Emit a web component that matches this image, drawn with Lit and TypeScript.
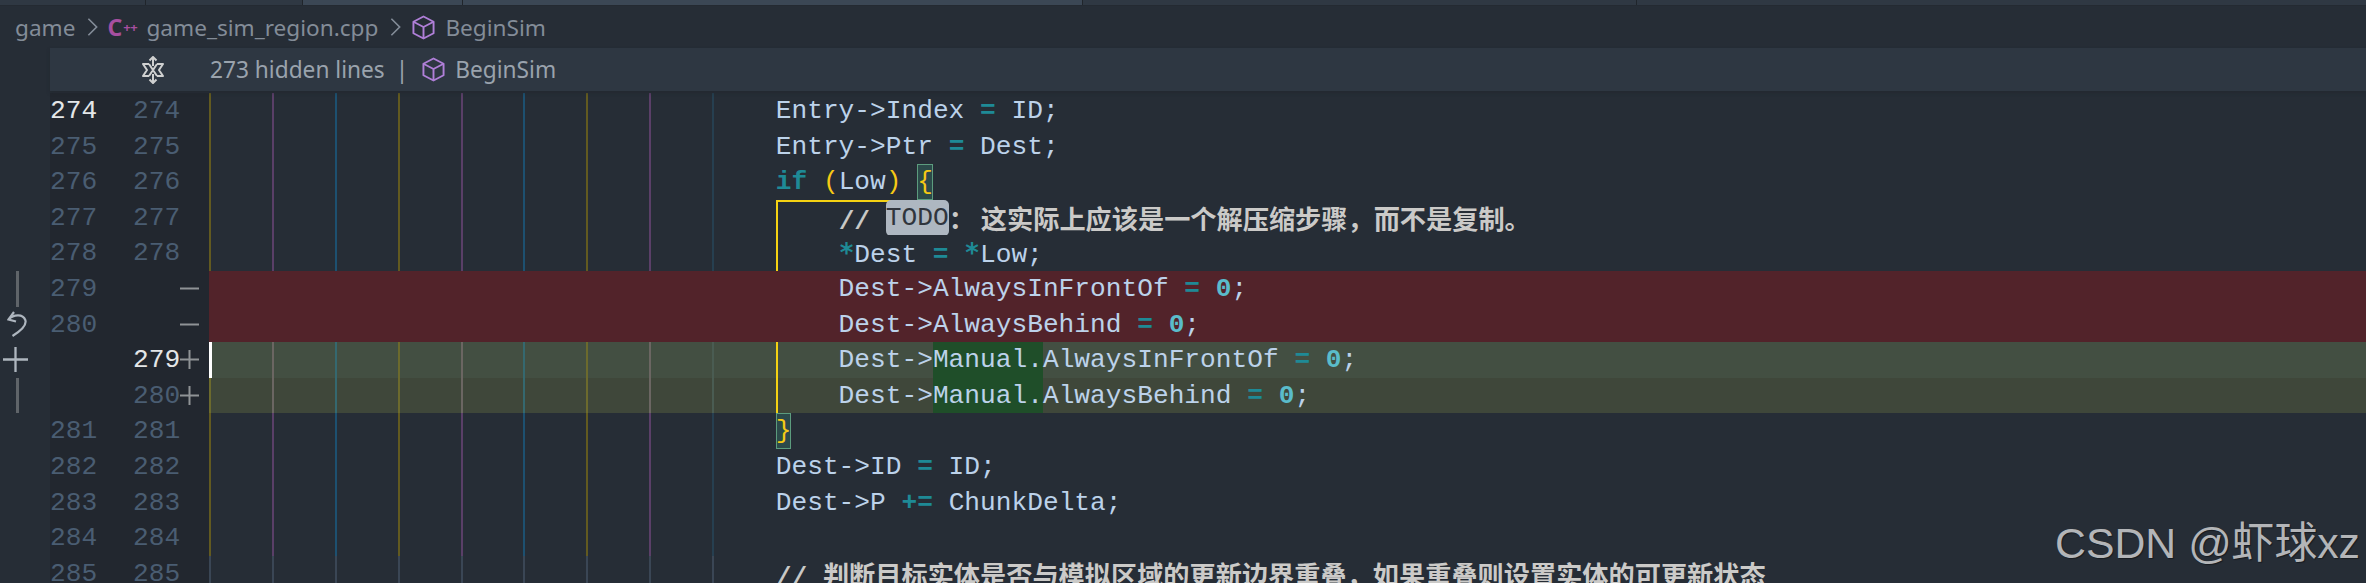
import { LitElement, html, css, svg } from "lit";
import { customElement } from "lit/decorators.js";

const cube = html`<svg class="cube" viewBox="0 0 24 26" fill="none" stroke="#b07fd8" stroke-width="2" stroke-linejoin="round"><path d="M12 1.500 22.500 7v12L12 24.500 1.500 19V7z"/><path d="M1.500 7 12 12.500 22.500 7M12 12.500v12"/></svg>`;
const chevron = html`<svg class="chev" viewBox="0 0 12 22" fill="none" stroke="#838c98" stroke-width="1.8"><path d="M1.500 2 10.500 11 1.500 20"/></svg>`;

type Kind = "" | "del" | "add1" | "add2" | "dim";
interface Row {
  o: string; n: string; sign?: "-" | "+"; kind?: Kind; active?: "o" | "n"; glyph?: "bar" | "undo" | "plus";
  code?: unknown; bracket?: "top" | "side";
}

const I = " ".repeat(36);
const op = (t: string) => html`<span class="op">${t}</span>`;
const star = html`<span class="op star">*</span>`;
const zero = html`<span class="num">0</span>`;

const rows: Row[] = [
  { o: "274", n: "274", active: "o", code: html`${I}Entry-&gt;Index ${op("=")} ID;` },
  { o: "275", n: "275", code: html`${I}Entry-&gt;Ptr ${op("=")} Dest;` },
  { o: "276", n: "276", code: html`${I}<span class="op">if</span> <span class="br">(</span>Low<span class="br">)</span> <span class="br match">{</span>` },
  { o: "277", n: "277", bracket: "top", code: html`${I}    <span class="cm">// </span><span class="todo">TODO</span><span class="cjk colon">：</span><span class="cjk">这实际上应该是一个解压缩步骤，而不是复制。</span>` },
  { o: "278", n: "278", bracket: "side", code: html`${I}    ${star}Dest ${op("=")} ${star}Low;` },
  { o: "279", n: "", sign: "-", kind: "del", glyph: "bar", code: html`${I}    Dest-&gt;AlwaysInFrontOf ${op("=")} ${zero};` },
  { o: "280", n: "", sign: "-", kind: "del", glyph: "undo", code: html`${I}    Dest-&gt;AlwaysBehind ${op("=")} ${zero};` },
  { o: "", n: "279", sign: "+", kind: "add1", active: "n", glyph: "plus", bracket: "side", code: html`${I}    Dest-&gt;<span class="ins">Manual.</span>AlwaysInFrontOf ${op("=")} ${zero};` },
  { o: "", n: "280", sign: "+", kind: "add2", glyph: "bar", bracket: "side", code: html`${I}    Dest-&gt;<span class="ins">Manual.</span>AlwaysBehind ${op("=")} ${zero};` },
  { o: "281", n: "281", code: html`${I}<span class="br match">}</span>` },
  { o: "282", n: "282", code: html`${I}Dest-&gt;ID ${op("=")} ID;` },
  { o: "283", n: "283", code: html`${I}Dest-&gt;P ${op("+=")} ChunkDelta;` },
  { o: "284", n: "284", code: html`` },
  { o: "285", n: "285", kind: "dim", code: html`${I}<span class="cm">// </span><span class="cjk">判断目标实体是否与模拟区域的更新边界重叠，如果重叠则设置实体的可更新状态</span>` },
];

const glyphs = {
  bar: html`<i class="gbar"></i>`,
  undo: html`<svg class="gsvg" viewBox="0 0 20 26" fill="none" stroke="#aeb6bf" stroke-width="2.2"><path d="M7 1 1.500 8.500 9 10.500"/><path d="M1.500 8.500C7 3 16 3 18.300 9c1.700 5-3 10-12.800 16"/></svg>`,
  plus: html`<svg class="gsvg plus" viewBox="0 0 26 26" stroke="#aeb6bf" stroke-width="2.400"><path d="M0 13h26M13 0v26"/></svg>`,
};

@customElement("app-root")
export class AppRoot extends LitElement {
  static styles = css`
    :host { display: block; width: 2366px; height: 583px; overflow: hidden; position: relative; background: #262d36; }
    .tabs { display: flex; height: 6px; background: #2f3843; border-bottom: 1px solid #242a32; box-sizing: border-box; }
    .tabs i { display: block; height: 100%; box-sizing: border-box; border-right: 1px solid #20252b; }
    .tabs .t1 { width: 146px; }
    .tabs .t2 { width: 157px; }
    .tabs .t3 { width: 160px; background: #3b4755; }
    .tabs .t4 { width: 620px; background: #3b4755; }
    .tabs .t5 { width: 554px; }
    .crumbs { height: 42px; display: flex; align-items: center; padding-left: 15px; font: 22.6px "Noto Sans", sans-serif; color: #838c98; white-space: nowrap; }
    .chev { width: 11px; height: 22px; margin: 0 9px 0 12px; flex: none; }
    .cube { width: 23px; height: 25px; flex: none; margin-left: 2px; }
    .cpp { color: #a64fa0; font: 700 23px "Noto Sans", sans-serif; width: 39px; display: flex; align-items: center; }
    .cpp small { font-size: 13px; letter-spacing: -0.5px; margin-left: 1px; }
    .crumbs .sym { margin-left: 10px; }
    .sticky { height: 43px; margin-left: 50px; background: #2e3742; display: flex; align-items: center; font: 22.7px "Noto Sans", sans-serif; color: #9aa3ad; white-space: nowrap; box-shadow: 0 2px 3px #20252b80; position: relative; z-index: 2; }
    .unfold { width: 24px; height: 28px; margin-left: 91px; margin-right: 45px; flex: none; }
    .sep { margin: 0 12px 0 11px; }
    .sticky .sym { margin-left: 10px; }
    .editor { padding-top: 2px; }
    .row { display: flex; height: 35.6px; }
    .glyph { width: 50px; flex: none; position: relative; display: flex; justify-content: center; align-items: center; }
    .gbar { display: block; width: 3px; height: 100%; background: #5f6469; margin-right: 15px; }
    .gsvg { width: 20px; height: 26px; margin-right: 17px; }
    .gsvg.plus { width: 25px; height: 25px; margin-right: 20px; }
    .num-col, .sign { background: #22272f; flex: none; font: 26.2px/37.6px "Liberation Mono", monospace; color: #4a5d72; height: 100%; }
    .old { width: 83px; }
    .new { width: 47px; }
    .sign { width: 29px; display: flex; align-items: center; }
    .sign svg { width: 19px; height: 19px; display: block; }
    .on { color: #e4e6e8; }
    .code { flex: 1; position: relative; background: #262d36; font: 26.2px/37.6px "Liberation Mono", "Noto Sans CJK SC", monospace; color: #bcd2ea; min-width: 0; }
    .code.del { background: #52232a; }
    .code.add1 { background: #434f42; }
    .code.add2 { background: #3f473a; }
    .txt { position: relative; display: block; height: 100%; white-space: pre; padding-left: 1px; }
    .guides { position: absolute; inset: 0; display: flex; }
    .guides i { display: block; width: 62.88px; height: 100%; flex: none; box-sizing: border-box; border-left: 2px solid; }
    .guides .g0 { border-color: #625a20; }
    .guides .g1 { border-color: #5a3f68; }
    .guides .g2 { border-color: #1d5070; }
    .guides .g8 { border-color: #263f50; }
    .add1 .guides .g0, .add2 .guides .g0 { border-color: #6c6a2d; }
    .add1 .guides .g1, .add2 .guides .g1 { border-color: #6b6662; }
    .add1 .guides .g2, .add2 .guides .g2 { border-color: #35686f; }
    .add1 .guides .g8, .add2 .guides .g8 { border-color: #4a5c52; }
    .dim .guides i { border-color: #3a4655; }
    .indicator { position: absolute; left: 0; top: 0; bottom: 0; width: 3px; background: #fff; z-index: 1; }
    .bk { position: absolute; left: 567px; top: 0; bottom: 0; width: 2px; background: #f5d213; }
    .bk.top { width: 142px; height: 2px; bottom: auto; }
    .bk.top::after { content: ""; position: absolute; left: 0; top: 0; width: 2px; height: 35.6px; background: #f5d213; }
    .op { color: #1e8a96; font-weight: 700; }
    .star { font-family: "DejaVu Sans Mono", monospace; font-size: 26px; }
    .num { color: #5abcca; font-weight: 700; }
    .br { color: #f6c915; }
    .match { display: inline-block; height: 35.6px; background: #2c4a4a; box-shadow: inset 0 0 0 1px #5c9c7e; vertical-align: top; }
    .cm { color: #c8c8c6; font-weight: 700; }
    .todo { display: inline-block; height: 36px; background: #aeb7c1; color: #30353d; border-radius: 5px; vertical-align: top; }
    .cjk { font-family: "Noto Sans CJK SC", sans-serif; font-weight: 700; color: #cbcac8; font-size: 26.2px; }
    .colon { margin-right: 6px; }
    .ins { display: inline-block; height: 35.6px; background: #1f4e29; vertical-align: top; }
    .wm { position: absolute; left: 2055px; top: 516px; font: 42.8px/54px "Liberation Sans", "Noto Sans CJK SC", sans-serif; color: #b3b5b8; white-space: nowrap; text-shadow: 1px 1px 1px #0006; }
  `;

  private sign(s?: "-" | "+") {
    if (!s) return null;
    return html`<svg viewBox="0 0 19 19" stroke="#8f9396" stroke-width="2">${s === "-" ? svg`<path d="M0 9.500h19"/>` : svg`<path d="M0 9.500h19M9.500 0v19"/>`}</svg>`;
  }

  render() {
    return html`
      <div class="tabs"><i class="t1"></i><i class="t2"></i><i class="t3"></i><i class="t4"></i><i class="t5"></i></div>
      <div class="crumbs">
        <span>game</span>${chevron}
        <span class="cpp">C<small>++</small></span><span>game_sim_region.cpp</span>${chevron}${cube}<span class="sym">BeginSim</span>
      </div>
      <div class="sticky">
        <svg class="unfold" viewBox="0 0 24 28" fill="none" stroke="#cfd0d0" stroke-width="2" stroke-linejoin="round">
          <path d="M12 1v9M8.500 4.500 12 1l3.500 3.500M12 27v-9M8.500 23.500 12 27l3.500-3.500"/>
          <path d="M8 8H2l4 6-4 6h6M16 8h6l-4 6 4 6h-6M8 20l4-6 4 6M8 8l4 6 4-6"/>
        </svg>
        <span>273 hidden lines</span><span class="sep">|</span>${cube}<span class="sym">BeginSim</span>
      </div>
      <div class="editor">
        ${rows.map((r) => html`
          <div class="row">
            <div class="glyph">${r.glyph ? glyphs[r.glyph] : null}</div>
            <div class="num-col old ${r.active === "o" ? "on" : ""}">${r.o}</div>
            <div class="num-col new ${r.active === "n" ? "on" : ""}">${r.n}</div>
            <div class="sign">${this.sign(r.sign)}</div>
            <div class="code ${r.kind ?? ""}">
              ${r.kind === "del" ? null : html`<div class="guides">${[0, 1, 2, 3, 4, 5, 6, 7, 8].map((i) => html`<i class="${i === 8 ? "g8" : "g" + (i % 3)}"></i>`)}</div>`}
              ${r.bracket ? html`<div class="bk ${r.bracket === "top" ? "top" : ""}"></div>` : null}
              ${r.kind === "add1" ? html`<div class="indicator"></div>` : null}
              <span class="txt">${r.code}</span>
            </div>
          </div>`)}
      </div>
      <div class="wm">CSDN @虾球xz</div>
    `;
  }
}
